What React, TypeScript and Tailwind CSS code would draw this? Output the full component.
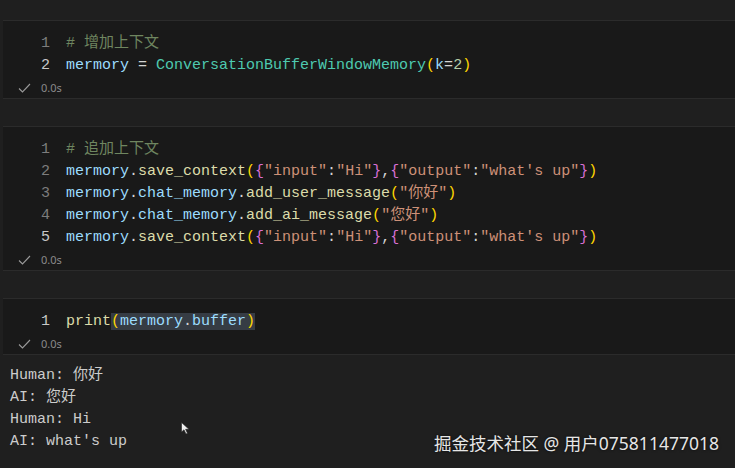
import React from 'react';

type Tok = [string, string];

const C = {
  v: 'text-[#9cdcfe]',
  op: 'text-[#d4d4d4]',
  cls: 'text-[#4ec9b0]',
  fn: 'text-[#dcdcaa]',
  p1: 'text-[#ffd700]',
  p2: 'text-[#da70d6]',
  str: 'text-[#ce9178]',
  num: 'text-[#b5cea8]',
  cm: 'text-[#6f8660]',
};

const mono = "font-['Liberation_Mono','Noto_Sans_CJK_SC',monospace]";

const saveLine: Tok[] = [
  ['mermory', C.v],
  ['.', C.op],
  ['save_context', C.fn],
  ['(', C.p1],
  ['{', C.p2],
  ['"input"', C.str],
  [':', C.op],
  ['"Hi"', C.str],
  ['}', C.p2],
  [',', C.op],
  ['{', C.p2],
  ['"output"', C.str],
  [':', C.op],
  ["\"what's up\"", C.str],
  ['}', C.p2],
  [')', C.p1],
];

const Status: React.FC = () => (
  <div className="flex items-center h-[21px] pl-[15px] text-[11px] text-[#8a8a8a] font-['Noto_Sans','Liberation_Sans',sans-serif]">
    <svg width="13" height="10" viewBox="0 0 13 10" className="mr-[10px]">
      <path d="M1 5.5 L4.5 9 L12 1" fill="none" stroke="#9a9a9a" strokeWidth="1.1" />
    </svg>
    <span>0.0s</span>
  </div>
);

const Cell: React.FC<{ lines: Tok[][]; active: number; highlight?: boolean }> = ({ lines, active, highlight }) => (
  <div className={`ml-[3px] border-y border-[#2b2b2b] bg-[#191919] pt-[12px] ${mono} text-[15px] leading-[22px]`}>
    {lines.map((toks, i) => (
      <div key={i} className="flex">
        <div className={`w-[47px] text-right ${i === active ? 'text-[#c8c8c8]' : 'text-[#7d7d7d]'}`}>{i + 1}</div>
        <div className="pl-[16px] whitespace-pre">
          {highlight ? (
            <>
              <span className={C.fn}>print</span>
              <span className="bg-[#363c44]">
                <span className={C.p1}>(</span>
                <span className={C.v}>mermory</span>
                <span className={C.op}>.</span>
                <span className={C.v}>buffer</span>
                <span className={C.p1}>)</span>
              </span>
            </>
          ) : (
            toks.map(([t, c], j) => (
              <span key={j} className={c}>
                {t}
              </span>
            ))
          )}
        </div>
      </div>
    ))}
    <Status />
  </div>
);

const App: React.FC = () => {
  const cell1: Tok[][] = [
    [['# 增加上下文', C.cm]],
    [
      ['mermory', C.v],
      [' = ', C.op],
      ['ConversationBufferWindowMemory', C.cls],
      ['(', C.p1],
      ['k', C.v],
      ['=', C.op],
      ['2', C.num],
      [')', C.p1],
    ],
  ];

  const cell2: Tok[][] = [
    [['# 追加上下文', C.cm]],
    saveLine,
    [
      ['mermory', C.v],
      ['.', C.op],
      ['chat_memory', C.v],
      ['.', C.op],
      ['add_user_message', C.fn],
      ['(', C.p1],
      ['"你好"', C.str],
      [')', C.p1],
    ],
    [
      ['mermory', C.v],
      ['.', C.op],
      ['chat_memory', C.v],
      ['.', C.op],
      ['add_ai_message', C.fn],
      ['(', C.p1],
      ['"您好"', C.str],
      [')', C.p1],
    ],
    saveLine,
  ];

  return (
    <div className="relative w-[735px] h-[468px] overflow-hidden bg-[#1f1f1f] pt-[20px]">
      <Cell lines={cell1} active={1} />
      <div className="h-[27px]" />
      <Cell lines={cell2} active={4} />
      <div className="h-[27px]" />
      <Cell lines={[[]]} active={0} highlight />

      <div className={`pt-[10px] pl-[10px] ${mono} text-[15px] leading-[22px] text-[#cccccc] whitespace-pre`}>
        <div>Human: 你好</div>
        <div>AI: 您好</div>
        <div>Human: Hi</div>
        <div>AI: what's up</div>
      </div>

      <svg className="absolute left-[181px] top-[422px]" width="9" height="13" viewBox="0 0 9 13">
        <path d="M0.5 0.5 L0.5 10 L3 7.8 L5 12 L6.5 11.3 L4.6 7.3 L8 7.3 Z" fill="#f0f0f0" stroke="#222" strokeWidth="0.6" />
      </svg>

      <div className="absolute left-[434px] top-[430px] text-[17.5px] leading-[26px] text-[#e6e6e6] font-['Noto_Sans','Noto_Sans_CJK_SC',sans-serif] [text-shadow:0_0_3px_rgba(0,0,0,0.8)]">
        掘金技术社区 @ 用户075811477018
      </div>
    </div>
  );
};

export default App;
